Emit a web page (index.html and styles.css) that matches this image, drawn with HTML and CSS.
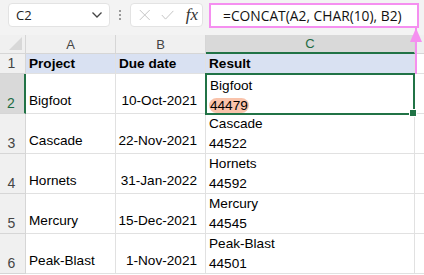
FILE: index.html
```html
<!DOCTYPE html>
<html lang="en">

<head>
	<meta charset="UTF-8">
	<title>CONCAT with line break</title>
	<link rel="stylesheet" href="styles.css">
</head>

<body>
	<div class="bar">
		<div class="namebox">
			<span>C2</span>
			<svg width="12" height="8" viewBox="0 0 12 8"><path d="M1.5 1.5 L6 6 L10.5 1.5" fill="none" stroke="#444" stroke-width="1.3"/></svg>
		</div>
		<div class="dots"><i></i><i></i><i></i></div>
		<div class="fbuttons">
			<svg width="14" height="14" viewBox="0 0 14 14"><path d="M1 1 L13 13 M13 1 L1 13" stroke="#c4c4c4" stroke-width="1.2"/></svg>
			<svg width="16" height="12" viewBox="0 0 16 12"><path d="M1 6 L5.5 11 L15 1" fill="none" stroke="#c4c4c4" stroke-width="1.2"/></svg>
			<span class="fx">fx</span>
		</div>
		<div class="formula">=CONCAT(A2, CHAR(10), B2)</div>
	</div>

	<div class="sheet">
		<div class="corner"><span></span></div>
		<div class="colhead">A</div>
		<div class="colhead">B</div>
		<div class="colhead sel">C</div>
		<div class="colhead end"></div>

		<div class="rowhead">1</div>
		<div class="cell head">Project</div>
		<div class="cell head">Due date</div>
		<div class="cell head">Result</div>
		<div class="cell blank"></div>

		<div class="rowhead sel">2</div>
		<div class="cell">Bigfoot</div>
		<div class="cell date">10-Oct-2021</div>
		<div class="cell result active">Bigfoot<br><mark>44479</mark><b class="handle"></b></div>
		<div class="cell blank"></div>

		<div class="rowhead">3</div>
		<div class="cell">Cascade</div>
		<div class="cell date">22-Nov-2021</div>
		<div class="cell result">Cascade<br>44522</div>
		<div class="cell blank"></div>

		<div class="rowhead">4</div>
		<div class="cell">Hornets</div>
		<div class="cell date">31-Jan-2022</div>
		<div class="cell result">Hornets<br>44592</div>
		<div class="cell blank"></div>

		<div class="rowhead">5</div>
		<div class="cell">Mercury</div>
		<div class="cell date">15-Dec-2021</div>
		<div class="cell result">Mercury<br>44545</div>
		<div class="cell blank"></div>

		<div class="rowhead">6</div>
		<div class="cell">Peak-Blast</div>
		<div class="cell date">1-Nov-2021</div>
		<div class="cell result">Peak-Blast<br>44501</div>
		<div class="cell blank"></div>
	</div>

	<div class="arrow"></div>
</body>

</html>
```

FILE: styles.css
```css
body {
	margin: 0;
	width: 424px;
	height: 275px;
	overflow: hidden;
	position: relative;
	background: #fff;
	font-family: "Liberation Sans", Arial, sans-serif;
	color: #000;
}

.bar {
	height: 35px;
	box-sizing: border-box;
	padding: 3px 0 0 8px;
	display: flex;
	align-items: flex-start;
	background: #f3f3f3;
}

.namebox {
	width: 102px;
	height: 24px;
	box-sizing: border-box;
	padding: 0 6px 0 7px;
	display: flex;
	align-items: center;
	justify-content: space-between;
	background: #fff;
	border: 1px solid #e3e3e3;
	border-radius: 4px;
	font-family: "Open Sans", sans-serif;
	font-size: 13px;
	color: #222;
}

.dots {
	width: 20px;
	height: 24px;
	display: flex;
	flex-direction: column;
	align-items: center;
	justify-content: center;
	gap: 2px;
}

.dots i {
	width: 2px;
	height: 2px;
	background: #9a9a9a;
}

.fbuttons {
	width: 73px;
	height: 24px;
	box-sizing: border-box;
	padding: 0 4px 0 8px;
	display: flex;
	align-items: center;
	gap: 10px;
	background: #fff;
	border: 1px solid #e3e3e3;
	border-radius: 4px;
}

.fx {
	font-family: "Liberation Serif", serif;
	font-style: italic;
	font-size: 17px;
	color: #333;
	margin-left: 2px;
}

.formula {
	margin-left: 6px;
	width: 210px;
	height: 25px;
	box-sizing: border-box;
	padding: 0 0 0 12px;
	display: flex;
	align-items: center;
	background: #fff;
	border: 2px solid #f58ff0;
	font-family: "Open Sans", sans-serif;
	font-size: 13.8px;
	color: #111;
}

.sheet {
	display: grid;
	grid-template-columns: 26px 90px 90px 209px 1fr;
	grid-template-rows: 19px 20px 40px 40px 40px 40px 40px;
	background: #fff;
}

.corner,
.colhead,
.rowhead {
	background: #f0f0f0;
	color: #444;
	font-size: 13px;
	box-sizing: border-box;
}

.corner {
	position: relative;
	border-right: 1px solid #d6d6d6;
	border-bottom: 1px solid #d6d6d6;
}

.corner span {
	position: absolute;
	right: 3px;
	bottom: 3px;
	width: 0;
	height: 0;
	border-left: 13px solid transparent;
	border-bottom: 13px solid #d8d8d8;
}

.colhead {
	display: flex;
	align-items: center;
	justify-content: center;
	border-right: 1px solid #d6d6d6;
	border-bottom: 1px solid #d6d6d6;
}

.colhead.sel {
	background: #d9d9d9;
	color: #1e6b43;
	border-bottom: 2px solid #217346;
}

.colhead.end {
	border-right: 0;
}

.rowhead {
	display: flex;
	align-items: flex-end;
	justify-content: center;
	padding: 0 2px 2px 0;
	border-right: 1px solid #d6d6d6;
	border-bottom: 1px solid #d6d6d6;
	font-size: 14px;
}

.rowhead.sel {
	background: #d9d9d9;
	color: #1e6b43;
	border-right: 2px solid #217346;
}

.cell {
	box-sizing: border-box;
	display: flex;
	align-items: flex-end;
	padding: 0 3px 2px 3px;
	border-right: 1px solid #e1e1e1;
	border-bottom: 1px solid #e1e1e1;
	font-size: 13.6px;
	line-height: 20px;
	white-space: nowrap;
}

.cell.head {
	background: #d9e1f2;
	font-weight: bold;
	padding-bottom: 0;
	align-items: center;
}

.cell.blank {
	border-right: 0;
	background: #fff;
}

.cell.date {
	justify-content: flex-end;
	padding-right: 8px;
}

.cell.result {
	display: block;
	padding: 0 0 0 3px;
}

.cell.active {
	position: relative;
	border: 2px solid #217346;
	margin: -1px 0 -1px -1px;
	padding: 1px 0 0 3px;
}

mark {
	background: #f9c3ab;
	color: #000;
	border-radius: 8px;
	padding: 0 1px;
	margin-left: -1px;
}

.handle {
	position: absolute;
	right: -4px;
	bottom: -4px;
	width: 6px;
	height: 6px;
	background: #217346;
	border: 1px solid #fff;
}

.arrow {
	position: absolute;
	left: 415px;
	top: 28px;
	width: 2px;
	height: 46px;
	background: #f58ff0;
}

.arrow::before {
	content: "";
	position: absolute;
	left: -5px;
	top: 0;
	border-left: 6px solid transparent;
	border-right: 6px solid transparent;
	border-bottom: 14px solid #f58ff0;
}
```
